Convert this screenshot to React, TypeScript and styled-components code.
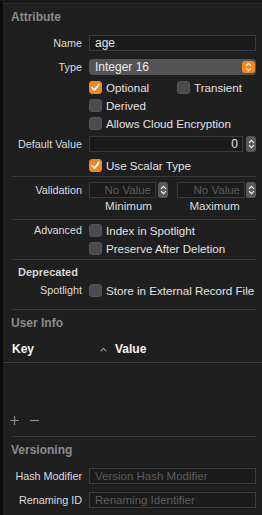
import React from 'react';
import styled, { createGlobalStyle } from 'styled-components';

const GlobalStyle = createGlobalStyle`
  html, body {
    margin: 0;
    padding: 0;
    background: #1f1f20;
  }
  body {
    font-family: "Liberation Sans", Arial, sans-serif;
    font-size: 11px;
    color: #dedede;
    -webkit-font-smoothing: antialiased;
  }
`;

const Panel = styled.div`
  width: 262px;
  height: 515px;
  box-sizing: border-box;
  border-left: 3px solid #0b0b0b;
  border-top: 3px solid #181818;
  background: #1f1f20;
  overflow: hidden;
  display: flex;
  flex-direction: column;
  & > * {
    flex-shrink: 0;
  }
`;

const TopLine = styled.div`
  height: 1px;
  background: #2e2e2f;
`;

const Header = styled.div<{ $h: number; $x?: number; $light?: boolean }>`
  height: ${p => p.$h}px;
  display: flex;
  align-items: center;
  padding-left: ${p => p.$x ?? 8}px;
  font-weight: bold;
  font-size: ${p => (p.$light ? 11 : 12)}px;
  color: ${p => (p.$light ? '#d6d6d6' : '#8b8b8c')};
`;

const Row = styled.div<{ $h: number }>`
  height: ${p => p.$h}px;
  display: grid;
  grid-template-columns: 79px 1fr;
  column-gap: 7px;
  align-items: center;
  padding-right: 6px;
`;

const Label = styled.div`
  text-align: right;
  white-space: nowrap;
  font-size: 10.8px;
  color: #dcdcdc;
`;

const Cell = styled.div`
  display: flex;
  align-items: center;
  min-width: 0;
`;

const TextField = styled.div<{ $placeholder?: boolean; $right?: boolean }>`
  flex: 1;
  height: 16px;
  box-sizing: border-box;
  border: 1px solid #3b3b3c;
  background: #1b1b1b;
  display: flex;
  align-items: center;
  justify-content: ${p => (p.$right ? 'flex-end' : 'flex-start')};
  padding: 0 4px 0 5px;
  font-size: ${p => (p.$placeholder ? 11.5 : 12)}px;
  color: ${p => (p.$placeholder ? '#5c5c5d' : '#e6e6e6')};
  white-space: nowrap;
  overflow: hidden;
`;

const Popup = styled.div`
  flex: 1;
  height: 16px;
  border-radius: 4px;
  background: #535355;
  display: flex;
  align-items: center;
  justify-content: space-between;
  padding: 0 1px 0 6px;
  font-size: 12px;
  color: #ececec;
`;

const StepperBox = styled.div<{ $orange?: boolean; $w: number; $hgt: number }>`
  width: ${p => p.$w}px;
  height: ${p => p.$hgt}px;
  border-radius: 3px;
  background: ${p => (p.$orange ? '#f0871f' : '#5a5a5c')};
  display: flex;
  align-items: center;
  justify-content: center;
  flex-shrink: 0;
`;

const Stepper: React.FC<{ orange?: boolean; w?: number; h?: number; ml?: number }> = ({
  orange,
  w = 10,
  h = 16,
  ml = 0,
}) => (
  <StepperBox $orange={orange} $w={w} $hgt={h} style={{ marginLeft: ml }}>
    <svg width="7" height="10" viewBox="0 0 7 10">
      <path d="M1 3.8 L3.5 1.3 L6 3.8" fill="none" stroke="#f4f4f4" strokeWidth="1.2" />
      <path d="M1 6.2 L3.5 8.7 L6 6.2" fill="none" stroke="#f4f4f4" strokeWidth="1.2" />
    </svg>
  </StepperBox>
);

const Box = styled.span<{ $checked?: boolean }>`
  width: 13px;
  height: 13px;
  border-radius: 3px;
  box-sizing: border-box;
  background: ${p => (p.$checked ? '#f0871f' : '#4c4c4e')};
  border: 1px solid ${p => (p.$checked ? '#f0871f' : '#555557')};
  display: inline-flex;
  align-items: center;
  justify-content: center;
  flex-shrink: 0;
`;

const CheckWrap = styled.div<{ $w?: number }>`
  display: flex;
  align-items: center;
  gap: 4px;
  width: ${p => (p.$w ? `${p.$w}px` : 'auto')};
  white-space: nowrap;
  font-size: 11.6px;
  color: #e2e2e2;
`;

const Check: React.FC<{ label: string; checked?: boolean; w?: number }> = ({ label, checked, w }) => (
  <CheckWrap $w={w}>
    <Box $checked={checked}>
      {checked && (
        <svg width="11" height="11" viewBox="0 0 11 11">
          <path d="M2 5.6 L4.4 8.2 L9 2.4" fill="none" stroke="#ffffff" strokeWidth="1.7" strokeLinecap="round" strokeLinejoin="round" />
        </svg>
      )}
    </Box>
    {label}
  </CheckWrap>
);

const Separator = styled.div<{ $mt: number; $mb: number; $full?: boolean }>`
  height: 1px;
  background: #3a3a3b;
  margin: ${p => p.$mt}px ${p => (p.$full ? 0 : 6)}px ${p => p.$mb}px ${p => (p.$full ? 0 : 9)}px;
`;

const SubLabels = styled.div`
  height: 12px;
  display: grid;
  grid-template-columns: 79px 79px 79px;
  column-gap: 7px;
  align-items: center;
  font-size: 11.6px;
  color: #dcdcdc;
  & > span {
    text-align: center;
  }
`;

const ValidationPair = styled.div`
  display: flex;
  align-items: center;
  width: 79px;
  margin-right: 9px;
  &:last-child {
    margin-right: 0;
  }
`;

const TableHead = styled.div`
  height: 26px;
  display: flex;
  align-items: center;
  padding-left: 9px;
  font-weight: bold;
  font-size: 12px;
  color: #f2f2f2;
`;

const KeyCol = styled.div`
  width: 88px;
`;

const ValueCol = styled.div`
  display: flex;
  align-items: center;
  gap: 8px;
`;

const TableBody = styled.div`
  height: 46px;
`;

const PlusMinus = styled.div`
  height: 22px;
  display: flex;
  align-items: center;
  padding-left: 7px;
  gap: 11px;
`;

const App: React.FC = () => {
  return (
    <>
      <GlobalStyle />
      <Panel>
        <TopLine />
        <Header $h={26}>Attribute</Header>
        <Row $h={26}>
          <Label>Name</Label>
          <Cell><TextField>age</TextField></Cell>
        </Row>
        <Row $h={22}>
          <Label>Type</Label>
          <Cell>
            <Popup>
              Integer 16
              <Stepper orange w={13} h={12} />
            </Popup>
          </Cell>
        </Row>
        <Row $h={18}>
          <span />
          <Cell>
            <Check label="Optional" checked w={88} />
            <Check label="Transient" />
          </Cell>
        </Row>
        <Row $h={18}>
          <span />
          <Cell><Check label="Derived" /></Cell>
        </Row>
        <Row $h={18}>
          <span />
          <Cell><Check label="Allows Cloud Encryption" /></Cell>
        </Row>
        <Row $h={24}>
          <Label>Default Value</Label>
          <Cell>
            <TextField $right>0</TextField>
            <Stepper ml={3} />
          </Cell>
        </Row>
        <Row $h={18}>
          <span />
          <Cell><Check label="Use Scalar Type" checked /></Cell>
        </Row>
        <Separator $mt={2} $mb={4} />
        <Row $h={18}>
          <Label>Validation</Label>
          <Cell>
            <ValidationPair>
              <TextField $placeholder $right>No Value</TextField>
              <Stepper ml={2} />
            </ValidationPair>
            <ValidationPair>
              <TextField $placeholder $right>No Value</TextField>
              <Stepper ml={1} />
            </ValidationPair>
          </Cell>
        </Row>
        <SubLabels>
          <span />
          <span>Minimum</span>
          <span>Maximum</span>
        </SubLabels>
        <Separator $mt={8} $mb={1} />
        <Row $h={18}>
          <Label>Advanced</Label>
          <Cell><Check label="Index in Spotlight" /></Cell>
        </Row>
        <Row $h={18}>
          <span />
          <Cell><Check label="Preserve After Deletion" /></Cell>
        </Row>
        <Separator $mt={2} $mb={2} />
        <Header $h={20} $x={15} $light>Deprecated</Header>
        <Row $h={16}>
          <Label>Spotlight</Label>
          <Cell><Check label="Store in External Record File" /></Cell>
        </Row>
        <Separator $mt={11} $mb={0} />
        <Header $h={26}>User Info</Header>
        <TableHead>
          <KeyCol>Key</KeyCol>
          <ValueCol>
            <svg width="7" height="5" viewBox="0 0 7 5">
              <path d="M0.7 4.3 L3.5 1.2 L6.3 4.3" fill="none" stroke="#9a9a9a" strokeWidth="1.1" />
            </svg>
            Value
          </ValueCol>
        </TableHead>
        <Separator $mt={0} $mb={0} $full />
        <TableBody />
        <PlusMinus>
          <svg width="9" height="9" viewBox="0 0 9 9">
            <path d="M4.5 0 V9 M0 4.5 H9" stroke="#8a8a8b" strokeWidth="1.2" />
          </svg>
          <svg width="9" height="9" viewBox="0 0 9 9">
            <path d="M0 4.5 H9" stroke="#8a8a8b" strokeWidth="1.2" />
          </svg>
        </PlusMinus>
        <Separator $mt={5} $mb={0} />
        <Header $h={26}>Versioning</Header>
        <Row $h={26}>
          <Label>Hash Modifier</Label>
          <Cell><TextField $placeholder>Version Hash Modifier</TextField></Cell>
        </Row>
        <Row $h={22}>
          <Label>Renaming ID</Label>
          <Cell><TextField $placeholder>Renaming Identifier</TextField></Cell>
        </Row>
      </Panel>
    </>
  );
};

export default App;
